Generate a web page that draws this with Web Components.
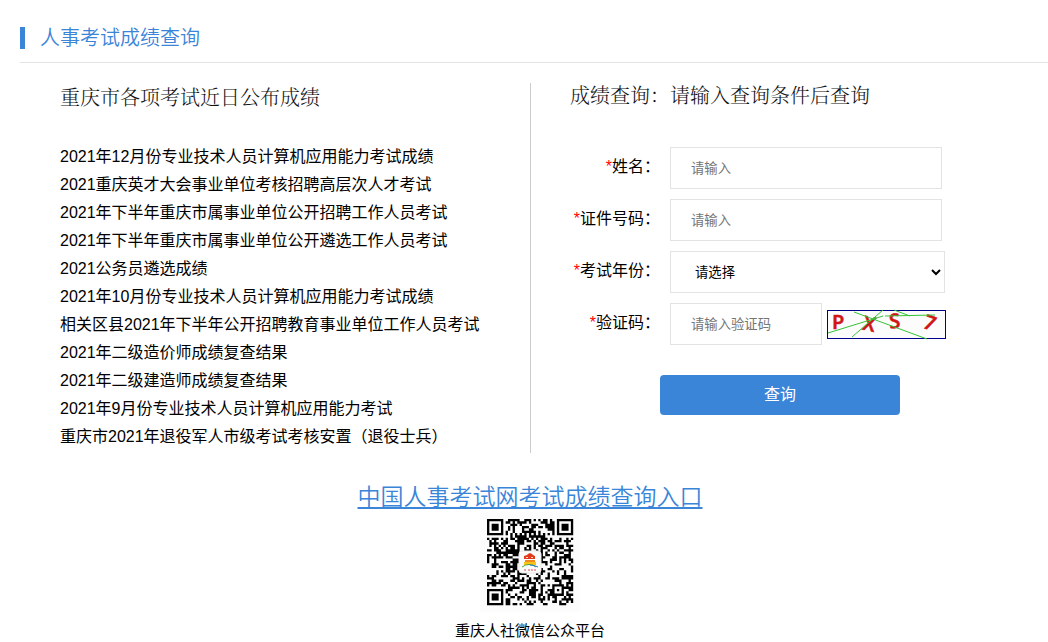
<!DOCTYPE html>
<html lang="zh-CN">
<head>
<meta charset="utf-8">
<title>人事考试成绩查询</title>
<style>
body { margin: 0; background: #fff; color: #000; font: 16px/28px "Liberation Sans", "Noto Sans CJK SC", sans-serif; }
</style>
</head>
<body>
<score-page></score-page>
<script>
function define(name, html, setup) {
  const template = document.createElement('template');
  template.innerHTML = html;
  customElements.define(name, class extends HTMLElement {
    constructor() {
      super();
      this.attachShadow({ mode: 'open' }).append(template.content.cloneNode(true));
    }
    connectedCallback() {
      if (setup && !this.ready) { this.ready = true; setup(this, this.shadowRoot); }
    }
  });
}

define('page-title', `
<style>
:host { display: flex; align-items: center; gap: 15px; height: 48px; padding-top: 14px; border-bottom: 1px solid #e3e3e3; }
i { width: 5px; height: 22px; background: #3b85d9; }
h1 { margin: 0; font-size: 20px; line-height: 24px; font-weight: 350; color: #3b85d9; }
</style>
<i></i><h1><slot></slot></h1>`);

define('panel-heading', `
<style>
:host { display: block; }
h2 { margin: 0; font: 300 20px/28px "Liberation Serif", "Noto Serif CJK SC", "Noto Sans CJK SC", serif; color: #111; }
</style>
<h2><slot></slot></h2>`);

define('exam-list', `
<style>
:host { display: block; }
ul { margin: 0; padding: 0; list-style: none; }
a { color: #000; text-decoration: none; white-space: nowrap; }
</style>
<ul></ul>`, (host, root) => {
  const exams = [
    '2021年12月份专业技术人员计算机应用能力考试成绩',
    '2021重庆英才大会事业单位考核招聘高层次人才考试',
    '2021年下半年重庆市属事业单位公开招聘工作人员考试',
    '2021年下半年重庆市属事业单位公开遴选工作人员考试',
    '2021公务员遴选成绩',
    '2021年10月份专业技术人员计算机应用能力考试成绩',
    '相关区县2021年下半年公开招聘教育事业单位工作人员考试',
    '2021年二级造价师成绩复查结果',
    '2021年二级建造师成绩复查结果',
    '2021年9月份专业技术人员计算机应用能力考试',
    '重庆市2021年退役军人市级考试考核安置（退役士兵）'
  ];
  root.querySelector('ul').innerHTML = exams.map(t => `<li><a href="#">${t}</a></li>`).join('');
});

define('captcha-image', `
<style>
:host { display: block; width: 119px; height: 29px; }
svg { display: block; overflow: visible; }
text { font: 600 20px "Open Sans", "Noto Sans", sans-serif; fill: #d01414; stroke: #d01414; stroke-width: .6px; }
</style>
<svg width="119" height="29" viewBox="0 0 119 29" role="img" aria-label="验证码">
  <rect x=".5" y=".5" width="118" height="28" fill="#fcfcfc" stroke="#00008b"/>
  <text x="5" y="19">P</text>
  <text x="36" y="21" transform="rotate(12 42 14)">X</text>
  <text x="62" y="18" transform="rotate(-5 67 10)">S</text>
  <text x="97" y="20" transform="rotate(20 103 13)">7</text>
  <path d="M1 23 56 6M25 27 56 0M27 2 100 29M58 6 108 5M67 0 83 6" fill="none" stroke="#35c535"/>
</svg>`);

define('query-form', `
<style>
:host { display: block; }
form { display: grid; grid-template-columns: 90px 1fr; column-gap: 10px; row-gap: 10px; align-items: center; }
label { text-align: right; white-space: nowrap; line-height: 40px; height: 42px; }
label span { color: #f00; }
input, select { box-sizing: border-box; height: 42px; border: 1px solid #e3e3e3; border-radius: 0; background-color: #fff; padding: 0 20px; font-family: inherit; }
input { width: 272px; }
select { width: 275px; color: #000; padding-right: 0; }
input.code { width: 152px; }
.row { display: flex; align-items: center; gap: 5px; }
button { grid-column: 1 / -1; width: 240px; height: 40px; margin: 20px 0 0 90px; border: 0; border-radius: 4px; background: #3b85d9; color: #fff; font: inherit; }
</style>
<form>
  <label for="name"><span>*</span>姓名：</label><input id="name" type="text" placeholder="请输入">
  <label for="card"><span>*</span>证件号码：</label><input id="card" type="text" placeholder="请输入">
  <label for="year"><span>*</span>考试年份：</label><select id="year"><option>请选择</option></select>
  <label for="code"><span>*</span>验证码：</label><div class="row"><input id="code" class="code" type="text" placeholder="请输入验证码"><captcha-image></captcha-image></div>
  <button type="button">查询</button>
</form>`);

define('qr-code', `
<style>
:host { display: block; width: 100px; height: 100px; background: #fcfcfc; }
svg { display: block; }
</style>
<svg width="100" height="100" viewBox="0 0 100 100" role="img" aria-label="微信公众平台二维码">
  <g transform="translate(7 7) scale(2.33)"><path id="cells" fill="#000"/></g>
  <rect x="39" y="39" width="22" height="22" rx="3" fill="#fcfcfc" stroke="#e8e8e8"/>
  <path d="M44 47v-3l3-1 1-1 2-1 2 1 1 1 2 1v3z" fill="#e2391f"/>
  <path d="M46 45h2v1h-2zM51 45h2v1h-2z" fill="#ffe0b0"/>
  <path d="M45 48h10v2h-10z" fill="#f08a1d"/>
  <path d="M44 50h12v3h-12z" fill="#f9c419"/>
  <path d="M42 55q7-5 14 0" fill="none" stroke="#52a849"/>
  <path d="M50 53q4 0 8 2" fill="none" stroke="#2a78c8"/>
  <path d="M44 58h2M48 58h2M51 58h2M54 58h2" stroke="#db4b4b"/>
</svg>`, (host, root) => {
  const size = 37;
  let seed = 20211;
  const next = () => (seed = (seed * 1103515245 + 12345) % 2147483648) / 2147483648;
  // Concentric squares of a marker: dark on every ring except the given light ones.
  const marker = (x, y, cx, cy, reach, light) => {
    const d = Math.max(Math.abs(x - cx), Math.abs(y - cy));
    return d > reach ? null : !light.includes(d);
  };
  let path = '';
  for (let y = 0; y < size; y++) for (let x = 0; x < size; x++) {
    let dark = next() < 0.51;
    if (y === 6) dark = x % 2 === 0;
    if (x === 6) dark = y % 2 === 0;
    for (const m of [marker(x, y, 3, 3, 4, [2, 4]), marker(x, y, 33, 3, 4, [2, 4]), marker(x, y, 3, 33, 4, [2, 4]), marker(x, y, 30, 30, 2, [1])])
      if (m !== null) dark = m;
    if (dark) path += `M${x} ${y}h1v1h-1z`;
  }
  root.querySelector('#cells').setAttribute('d', path);
});

define('site-footer', `
<style>
:host { display: flex; flex-direction: column; align-items: center; padding-top: 30px; }
.entry { font-size: 23px; line-height: 29px; font-weight: 350; color: #3b85d9; }
p { margin: 5px 0 0; font-size: 15px; line-height: 28px; }
</style>
<a class="entry" href="#">中国人事考试网考试成绩查询入口</a>
<qr-code></qr-code>
<p>重庆人社微信公众平台</p>`);

define('score-page', `
<style>
:host { display: block; padding-left: 20px; }
main { display: grid; grid-template-columns: 1fr 1fr; margin: 20px 8px 0 0; }
section { box-sizing: border-box; min-height: 370px; }
.recent { padding-left: 40px; padding-top: 1px; }
.query { padding-left: 39px; border-left: 1px solid #ccc; }
.recent panel-heading { margin-bottom: 31px; }
.query panel-heading { margin: -1px 0 37px; }
site-footer { margin-right: 8px; }
</style>
<page-title>人事考试成绩查询</page-title>
<main>
  <section class="recent"><panel-heading>重庆市各项考试近日公布成绩</panel-heading><exam-list></exam-list></section>
  <section class="query"><panel-heading>成绩查询：请输入查询条件后查询</panel-heading><query-form></query-form></section>
</main>
<site-footer></site-footer>`);
</script>
</body>
</html>
